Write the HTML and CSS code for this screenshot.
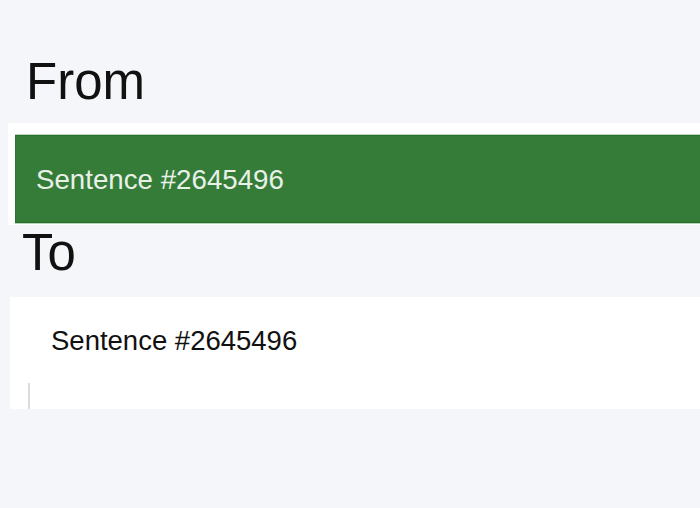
FILE: index.html
```html
<!DOCTYPE html>
<html>
<head>
<meta charset="utf-8">
<link rel="stylesheet" href="styles.css">
</head>
<body>
<div class="page">
  <h1 class="heading from">From</h1>
  <div class="card card-from">
    <div class="selected">Sentence #2645496</div>
  </div>
  <h1 class="heading to">To</h1>
  <div class="card card-to">
    <div class="item">Sentence #2645496</div>
    <div class="caret-row"><span class="caret"></span></div>
  </div>
</div>
</body>
</html>
```

FILE: styles.css
```css
html, body {
  margin: 0;
  padding: 0;
  background: #f5f6fa;
  font-family: "Liberation Sans", Arial, Helvetica, sans-serif;
  overflow: hidden;
}
.page {
  width: 700px;
  height: 508px;
  display: flex;
  flex-direction: column;
}
.heading {
  margin: 0;
  font-weight: normal;
  font-size: 51px;
  line-height: 51px;
  color: #111;
  padding-left: 23px;
}
.from {
  margin-top: 56px;
  margin-bottom: 16px;
  padding-left: 26px;
}
.card {
  background: #fff;
}
.card-from {
  margin-left: 8px;
  height: 102px;
  padding: 12px 0 0 7px;
  box-sizing: border-box;
}
.selected {
  height: 88px;
  box-sizing: border-box;
  background: #367c39;
  border-top: 1px solid #277128;
  border-bottom: 1px solid #277128;
  border-left: 1px solid #2c742e;
  box-shadow: 0 1px 0 #b9d0ba, 0 -1px 0 #c6d8c7;
  display: flex;
  align-items: center;
  padding-left: 20px;
  padding-top: 2px;
  font-size: 27.7px;
  line-height: 28px;
  color: #e8f1e8;
}
.to {
  margin-top: 2px;
  margin-bottom: 19px;
  padding-left: 22px;
}
.card-to {
  margin-left: 10px;
  height: 112px;
  box-sizing: border-box;
  padding-top: 30px;
  display: flex;
  flex-direction: column;
}
.item {
  padding-left: 41px;
  font-size: 27.5px;
  line-height: 28px;
  color: #111;
}
.caret-row {
  margin-top: 28px;
  flex: 1;
  padding-left: 18px;
  display: flex;
}
.caret {
  width: 2px;
  background: #dcdcdc;
}
```
